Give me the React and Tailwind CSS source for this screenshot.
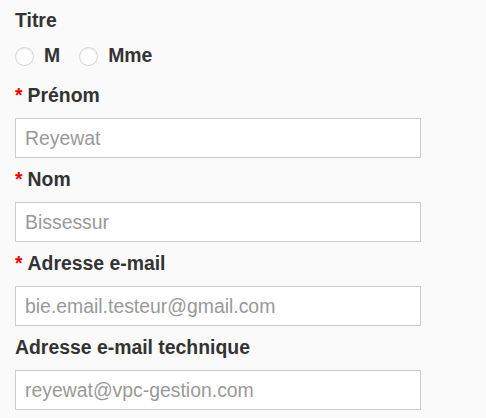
export default function App() {
  const fields = [
    { label: 'Prénom', value: 'Reyewat', required: true },
    { label: 'Nom', value: 'Bissessur', required: true },
    { label: 'Adresse e-mail', value: 'bie.email.testeur@gmail.com', required: true },
    { label: 'Adresse e-mail technique', value: 'reyewat@vpc-gestion.com', required: false },
  ]

  return (
    <div className="min-h-screen bg-[#fafafa] px-[15px] pt-[8px] font-['Liberation_Sans',Arial,sans-serif] text-[#333]">
      <div className="text-[19.4px] font-bold leading-[24px]">Titre</div>
      <div className="mt-[12px] flex h-[24px] items-center">
        <label className="flex items-center">
          <span className="h-[19px] w-[19px] rounded-full border border-[#d4d4d4] bg-white shadow-[inset_0_1px_2px_rgba(0,0,0,0.08)]" />
          <span className="ml-[10px] text-[19.4px] font-bold">M</span>
        </label>
        <label className="ml-[19px] flex items-center">
          <span className="h-[19px] w-[19px] rounded-full border border-[#d4d4d4] bg-white shadow-[inset_0_1px_2px_rgba(0,0,0,0.08)]" />
          <span className="ml-[10px] text-[19.4px] font-bold">Mme</span>
        </label>
      </div>
      {fields.map((f, i) => (
        <div key={f.label} className={i === 0 ? 'mt-[15px]' : 'mt-[9px]'}>
          <div className="text-[19.4px] font-bold leading-[24px]">
            {f.required && <span className="mr-[5px] text-[#e00]">*</span>}
            {f.label}
          </div>
          <input
            readOnly
            placeholder={f.value}
            className="mt-[11px] block h-[40px] w-[406px] border border-[#ccc] bg-white px-[9px] text-[19.4px] text-[#999] placeholder:text-[#999] outline-none"
          />
        </div>
      ))}
    </div>
  )
}
